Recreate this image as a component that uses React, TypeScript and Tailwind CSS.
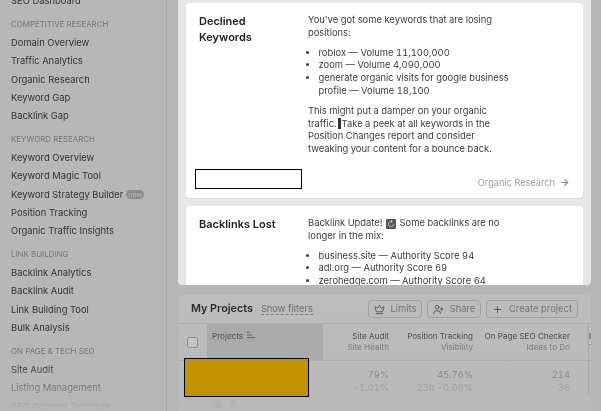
import React from "react";
import { ArrowRight, Crown, Plus, UserPlus, Camera, User } from "lucide-react";

const FONT = "font-['Inter',sans-serif]";

const NAV = [
  { title: "", items: ["SEO Dashboard"] },
  { title: "COMPETITIVE RESEARCH", items: ["Domain Overview", "Traffic Analytics", "Organic Research", "Keyword Gap", "Backlink Gap"] },
  { title: "KEYWORD RESEARCH", items: ["Keyword Overview", "Keyword Magic Tool", "Keyword Strategy Builder", "Position Tracking", "Organic Traffic Insights"] },
  { title: "LINK BUILDING", items: ["Backlink Analytics", "Backlink Audit", "Link Building Tool", "Bulk Analysis"] },
  { title: "ON PAGE & TECH SEO", items: ["Site Audit", "Listing Management", "SEO Content Template"] },
];

function Sidebar() {
  return (
    <aside className="relative w-[167px] h-full shrink-0 overflow-hidden border-r border-[#a6a6a6] bg-[#b7b7b7]">
      <div className="-mt-[8px] pl-[11px] flex flex-col gap-[6.2px] blur-[0.4px]">
        {NAV.map((section) => (
          <div key={section.items[0]} className="flex flex-col">
            {section.title && (
              <div className="h-[17px] flex items-center text-[7.9px] text-[#767676]">{section.title}</div>
            )}
            {section.items.map((item) => (
              <div key={item} className="h-[18.4px] flex items-center gap-[3px] text-[9.4px] text-[#333333] whitespace-nowrap">
                {item}
                {item === "Keyword Strategy Builder" && (
                  <span className="h-[9px] w-[18px] text-center rounded-full bg-[#8c8c8c] text-[#b7b7b7] text-[7px] leading-[9px]">new</span>
                )}
              </div>
            ))}
          </div>
        ))}
      </div>
      <div className="absolute left-0 right-0 bottom-0 h-[50px] bg-gradient-to-b from-transparent to-[#b7b7b7]" />
    </aside>
  );
}

function BulletList({ items }: { items: string[] }) {
  return (
    <ul className="mt-[7px] pl-[10.5px] list-disc text-[#3c3c3c]">
      {items.map((text) => (
        <li key={text}>{text}</li>
      ))}
    </ul>
  );
}

function DeclinedCard() {
  return (
    <section className="relative shrink-0 bg-white rounded-[4px] h-[195px] px-[13px] pt-[11px] flex shadow-[0_1px_1px_rgba(0,0,0,0.06)]">
      <h2 className="w-[109px] shrink-0 text-[11px] leading-[15.5px] font-semibold text-[#222222] blur-[0.4px]">
        Declined
        <br />
        Keywords
      </h2>
      <div className="w-[205px] text-[9.4px] leading-[12.8px] tabular-nums text-[#3c3c3c] blur-[0.4px]">
        <p>You've got some keywords that are losing positions:</p>
        <BulletList
          items={[
            "roblox — Volume 11,100,000",
            "zoom — Volume 4,090,000",
            "generate organic visits for google business profile — Volume 18,100",
          ]}
        />
        <p className="mt-[7px]">
          This might put a damper on your organic traffic.
          <span className="inline-block w-[3px] h-[11px] mx-[1px] align-[-2px] bg-[#333333]" />
          Take a peek at all keywords in the Position Changes report and consider tweaking your content for a bounce back.
        </p>
      </div>
      <div className="absolute left-[9px] top-[166px] w-[107px] h-[20px] bg-white border border-black" />
      <a className="absolute right-[13px] top-[173px] flex items-center gap-[4px] text-[9.2px] leading-[13px] text-[#a0a0a0] blur-[0.4px]">
        Organic Research
        <ArrowRight size={11} strokeWidth={2.5} className="text-[#8f8f8f]" />
      </a>
    </section>
  );
}

function BacklinksCard() {
  return (
    <section className="shrink-0 bg-white rounded-[4px] h-[120px] px-[13px] pt-[11px] flex">
      <h2 className="w-[109px] shrink-0 text-[11px] leading-[15.5px] font-semibold text-[#222222] blur-[0.4px]">Backlinks Lost</h2>
      <div className="w-[205px] text-[9.4px] leading-[12.8px] tabular-nums text-[#3c3c3c] blur-[0.4px]">
        <p>
          Backlink Update!{" "}
          <span className="inline-block w-[10px] h-[10px] mx-[1px] align-[-1px] rounded-[1px] bg-[#555555] text-center text-[8px] leading-[10px] text-[#cccccc]">↻</span>{" "}
          Some backlinks are no longer in the mix:
        </p>
        <BulletList
          items={["business.site — Authority Score 94", "adl.org — Authority Score 69", "zerohedge.com — Authority Score 64"]}
        />
      </div>
    </section>
  );
}

function OutlineButton({ icon, label, width }: { icon: React.ReactNode; label: string; width: string }) {
  return (
    <button className={`${width} h-[18px] flex items-center justify-center gap-[6px] rounded-[4px] border border-[#a0a0a0] text-[9.4px] text-[#757575] blur-[0.3px]`}>
      <span className="text-[#555555]">{icon}</span>
      {label}
    </button>
  );
}

function MetricColumn({ width, title, sub, value, delta }: { width: string; title: string; sub: string; value: string; delta: string }) {
  return (
    <div className={`${width} shrink-0 flex flex-col items-end whitespace-nowrap blur-[0.4px]`}>
      <div className="h-[36px] pt-[7px] flex flex-col items-end text-[8.1px] leading-[10.5px]">
        <span className="text-[#4e4e4e]">{title}</span>
        <span className="text-[#7c7c7c]">{sub}</span>
      </div>
      <div className="pt-[9px] flex flex-col items-end text-[9.4px] leading-[12.8px] tabular-nums">
        <span className="text-[#8a8a8a]">{value}</span>
        <span className="text-[#a3a3a3]">{delta}</span>
      </div>
    </div>
  );
}

function ProjectsCard() {
  return (
    <section className="mt-[10px] h-[116px] bg-gradient-to-b from-[#bdbdbd] to-[#b8b8b8] rounded-t-[4px] overflow-hidden">
      <div className="h-[28px] pl-[13px] pr-[13px] flex items-center">
        <h2 className="text-[10.8px] font-semibold text-[#2a2a2a] blur-[0.4px]">My Projects</h2>
        <a className="ml-[8px] text-[9.3px] text-[#6e6e6e] border-b border-dashed border-[#7d7d7d] leading-[11px] blur-[0.3px]">Show filters</a>
        <div className="ml-auto flex gap-[5px]">
          <OutlineButton width="w-[54px]" label="Limits" icon={<Crown size={11} />} />
          <OutlineButton width="w-[54px]" label="Share" icon={<UserPlus size={11} />} />
          <OutlineButton width="w-[92px]" label="Create project" icon={<Plus size={11} />} />
        </div>
      </div>
      <div className="relative border-t border-[#adadad]">
        <div className="absolute left-0 right-0 top-[36px] h-px bg-[#adadad]" />
        <div className="flex">
          <div className="w-[29px] h-[36px] shrink-0 flex items-center justify-center">
            <span className="w-[11px] h-[11px] rounded-[2px] border border-[#8e8e8e] bg-[#c4c4c4]" />
          </div>
          <div className="relative w-[116px] shrink-0">
            <div className="h-[36px] pl-[5px] pt-[7px] flex items-start gap-[4px] bg-[#aaaaaa] text-[8.1px] leading-[10.5px] text-[#4e4e4e] blur-[0.4px]">
              Projects
              <svg width="9" height="9" viewBox="0 0 10 10" className="-mt-[1px]" stroke="#5a5a5a" strokeWidth="1" fill="none">
                <path d="M0 8.5h9M0 5.5h6M0 2.5h3" />
              </svg>
            </div>
          </div>
          <MetricColumn width="w-[66px]" title="Site Audit" sub="Site Health" value="79%" delta="-1.01%" />
          <MetricColumn width="w-[84px]" title="Position Tracking" sub="Visibility" value="45.76%" delta="23h -0.08%" />
          <MetricColumn width="w-[97px]" title="On Page SEO Checker" sub="Ideas to Do" value="214" delta="36" />
          <div className="w-[1px] shrink-0 ml-[18px] self-stretch bg-[#a8a8a8]" />
          <div className="shrink-0 pt-[7px] text-[8.1px] leading-[10.5px] text-[#4e4e4e] blur-[0.4px]">
            <div>I</div>
            <div className="text-[#7c7c7c]">T</div>
          </div>
        </div>
        <div className="absolute left-[6px] top-[34px] w-[125px] h-[39px] bg-[#c29200] border border-black" />
        <div className="absolute left-[34px] top-[75px] flex gap-[6px] text-[#adadad]">
          <Camera size={10} />
          <User size={10} />
        </div>
      </div>
    </section>
  );
}

export default function App() {
  return (
    <div className={`${FONT} w-[601px] h-[411px] overflow-hidden flex bg-[#b6b6b6]`}>
      <Sidebar />
      <main className="flex-1 min-w-0 pl-[11px] pr-[10px]">
        <div className="h-[285px] overflow-hidden rounded-b-[4px] bg-[#e7e7e7] px-[8px] pt-[3px] flex flex-col gap-[8px]">
          <DeclinedCard />
          <BacklinksCard />
        </div>
        <ProjectsCard />
      </main>
    </div>
  );
}
